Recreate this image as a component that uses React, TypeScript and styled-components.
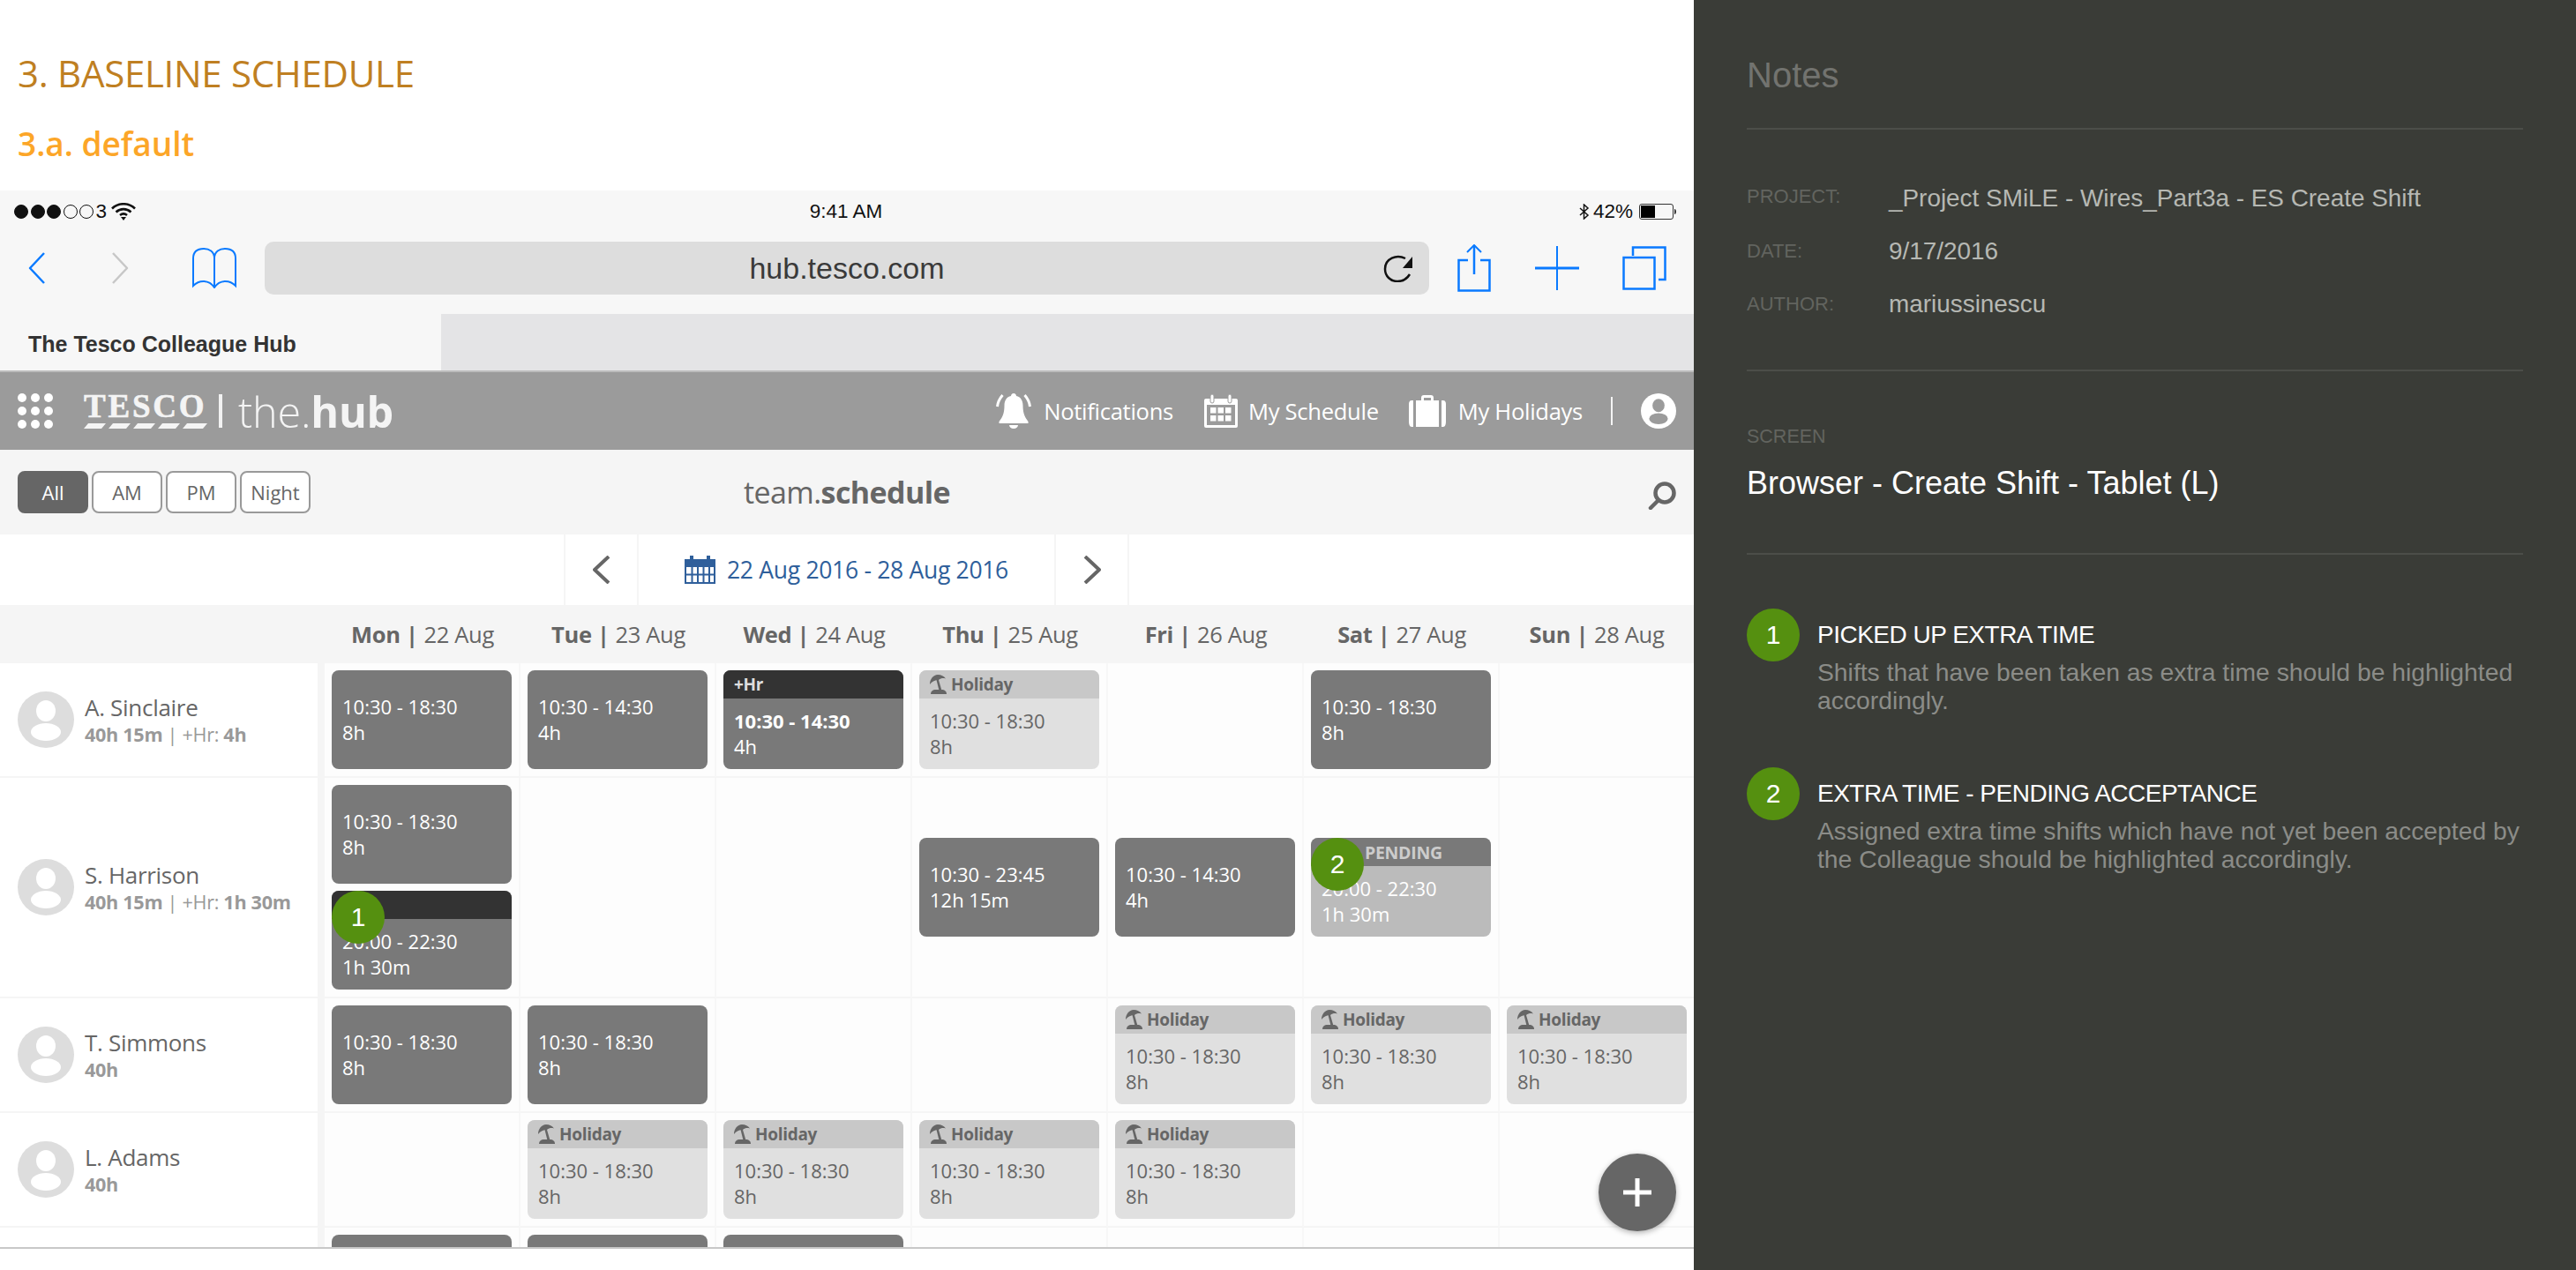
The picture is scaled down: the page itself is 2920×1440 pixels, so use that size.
import React from "react";
import styled, { createGlobalStyle } from "styled-components";

const Global = createGlobalStyle`
  html, body { margin: 0; padding: 0; background: #fff; }
  * { box-sizing: border-box; }
`;

const APP = `"Open Sans", sans-serif`;
const IOS = `"Liberation Sans", Arial, sans-serif`;

const Page = styled.div`
  display: grid;
  grid-template-columns: 1920px 1000px;
  width: 2920px;
  height: 1440px;
  overflow: hidden;
`;
const Left = styled.main`
  display: flex;
  flex-direction: column;
  height: 1440px;
  background: #fff;
`;
const Titles = styled.header`
  height: 216px;
  padding: 58px 0 0 20px;
  font-family: ${APP};
`;
const H1 = styled.h1`
  margin: 0;
  height: 50px;
  font-size: 42px;
  line-height: 50px;
  font-weight: 400;
  color: #bf7f22;
  letter-spacing: -0.3px;
`;
const H2 = styled.h2`
  margin: 32px 0 0;
  font-size: 37px;
  line-height: 46px;
  font-weight: 600;
  color: #fca628;
`;

/* ---------- iOS chrome ---------- */
const StatusBar = styled.div`
  display: grid;
  grid-template-columns: 1fr auto 1fr;
  align-items: center;
  height: 46px;
  padding: 2px 20px 0 18px;
  background: #f7f7f7;
  font-family: ${IOS};
  font-size: 22.5px;
  color: #111;
`;
const StatusLeft = styled.div`
  display: flex;
  align-items: center;
  gap: 2.5px;
  margin-left: -2px;
`;
const StatusRight = styled.div`
  display: flex;
  align-items: center;
  justify-content: flex-end;
  gap: 4px;
`;
const SignalDot = styled.span<{ $on: boolean }>`
  width: 16px;
  height: 16px;
  border-radius: 50%;
  border: 1px solid #111;
  background: ${(p) => (p.$on ? "#111" : "transparent")};
`;
const Toolbar = styled.div`
  display: flex;
  align-items: center;
  height: 94px;
  padding-bottom: 10px;
  background: #f7f7f7;
`;
const ToolSlot = styled.div<{ $w: number; $pad?: number }>`
  flex: none;
  display: flex;
  align-items: center;
  width: ${(p) => p.$w}px;
  padding-left: ${(p) => p.$pad ?? 0}px;
`;
const UrlBar = styled.div`
  position: relative;
  flex: none;
  display: flex;
  align-items: center;
  justify-content: center;
  width: 1320px;
  height: 60px;
  border-radius: 10px;
  background: #dddddd;
  font-family: ${IOS};
  font-size: 34px;
  color: #3a3a3a;
`;
const Reload = styled.svg`
  position: absolute;
  right: 19px;
  top: 14px;
`;
const TabStrip = styled.div`
  display: flex;
  height: 66px;
  background: #e4e4e6;
  border-bottom: 2px solid #bcbcbc;
`;
const ActiveTab = styled.div`
  width: 500px;
  height: 64px;
  padding: 18px 0 0 32px;
  background: #f7f7f7;
  font-family: ${IOS};
  font-size: 25px;
  line-height: 32px;
  font-weight: 700;
  color: #333;
`;

/* ---------- app header ---------- */
const AppBar = styled.div`
  display: flex;
  align-items: center;
  height: 88px;
  padding: 0 20px;
  background: #9b9b9b;
  color: #fff;
  font-family: ${APP};
`;
const Logo = styled.div`
  display: flex;
  align-items: center;
  flex: 1;
`;
const DotGrid = styled.div`
  display: grid;
  grid-template-columns: repeat(3, 10px);
  gap: 5px;
  margin-right: 35px;
`;
const Dot = styled.span`
  width: 10px;
  height: 10px;
  border-radius: 50%;
  background: #fff;
`;
const Wordmark = styled.div`
  position: relative;
  width: 140px;
  height: 40px;
  font-family: "Liberation Serif", serif;
  font-weight: 700;
  font-size: 37px;
  line-height: 30px;
  letter-spacing: 2.8px;
  color: #f4f4f4;
  -webkit-text-stroke: 0.6px #f4f4f4;
`;
const Stripes = styled.svg`
  position: absolute;
  left: 0;
  bottom: 0;
`;
const LogoBar = styled.span`
  width: 4px;
  height: 38px;
  margin: 0 18px 0 13px;
  background: #f2f2f2;
`;
const HubName = styled.div`
  font-size: 48.5px;
  line-height: 50px;
  font-weight: 300;
  color: #f4f4f4;
  letter-spacing: -0.2px;
  & b {
    font-weight: 700;
  }
`;
const NavItem = styled.div<{ $gap: number; $after: number }>`
  display: flex;
  align-items: center;
  gap: ${(p) => p.$gap}px;
  margin-right: ${(p) => p.$after}px;
  font-size: 25.6px;
  font-weight: 400;
  letter-spacing: -0.3px;
`;
const NavSep = styled.span`
  width: 2px;
  height: 32px;
  margin-right: 32px;
  background: #f5f5f5;
`;

/* ---------- sub bars ---------- */
const SubBar = styled.div`
  position: relative;
  display: flex;
  align-items: center;
  justify-content: center;
  height: 96px;
  background: #f5f5f5;
  font-family: ${APP};
`;
const Filters = styled.div`
  position: absolute;
  left: 20px;
  top: 24px;
  display: flex;
  gap: 4px;
`;
const Filter = styled.button<{ $on?: boolean }>`
  width: 80px;
  height: 48px;
  padding: 0;
  border-radius: 8px;
  border: 2px solid ${(p) => (p.$on ? "#666" : "#999")};
  background: ${(p) => (p.$on ? "#666" : "#fff")};
  color: ${(p) => (p.$on ? "#fff" : "#666")};
  font-family: ${APP};
  font-size: 22px;
  font-weight: 400;
`;
const PageTitle = styled.div`
  font-size: 34px;
  line-height: 44px;
  color: #666;
  letter-spacing: -0.6px;
  & b {
    font-weight: 700;
  }
`;
const SearchIcon = styled.svg`
  position: absolute;
  right: 20px;
  top: 36px;
`;
const DateBar = styled.div`
  display: flex;
  justify-content: center;
  height: 80px;
  padding-right: 1px;
  background: #fff;
  font-family: ${APP};
`;
const NavCell = styled.div`
  display: flex;
  align-items: center;
  justify-content: center;
  width: 85px;
  border-left: 2px solid #f5f5f5;
  border-right: 2px solid #f5f5f5;
`;
const DateRange = styled.div`
  display: flex;
  align-items: center;
  justify-content: center;
  gap: 13px;
  width: 471px;
  font-size: 26.5px;
  color: #2f5f9b;
  letter-spacing: -0.3px;
`;

/* ---------- schedule ---------- */
const Viewport = styled.div`
  position: relative;
  height: 730px;
  overflow: hidden;
  border-bottom: 2px solid #c8c8c8;
  font-family: ${APP};
`;
const Grid = styled.div`
  display: grid;
  grid-template-columns: 368px repeat(6, 222px) 220px;
`;
const DayHead = styled.div`
  height: 66px;
  display: flex;
  align-items: center;
  justify-content: center;
  background: #f5f5f5;
  font-size: 25.5px;
  color: #666;
  letter-spacing: -0.35px;
  & b {
    font-weight: 700;
    margin-right: 7px;
  }
`;
const NameCell = styled.div`
  display: flex;
  align-items: center;
  gap: 12px;
  padding-left: 20px;
  background: #fff;
  border-right: 8px solid #f5f5f5;
  border-bottom: 2px solid #f5f5f5;
`;
const NameText = styled.div`
  display: flex;
  flex-direction: column;
`;
const Person = styled.div`
  font-size: 26px;
  line-height: 32px;
  color: #666;
  letter-spacing: -0.3px;
`;
const Hours = styled.div`
  margin-top: 1px;
  font-size: 21.6px;
  line-height: 28px;
  font-weight: 700;
  color: #999;
  letter-spacing: -0.3px;
  white-space: nowrap;
  & span {
    font-weight: 400;
  }
`;
const DayCell = styled.div<{ $last?: boolean }>`
  display: flex;
  flex-direction: column;
  justify-content: center;
  gap: 8px;
  min-height: 130px;
  padding: 8px;
  background: #fdfdfd;
  border-right: ${(p) => (p.$last ? "0" : "2px solid #f7f7f7")};
  border-bottom: 2px solid #f5f5f5;
`;
type Tone = "work" | "extra" | "holiday" | "pending";
const bodyBg: Record<Tone, string> = { work: "#797979", extra: "#797979", holiday: "#e0e0e0", pending: "#bbbbbb" };
const headBg: Record<Tone, string> = { work: "#797979", extra: "#333333", holiday: "#c8c8c8", pending: "#797979" };
const headFg: Record<Tone, string> = { work: "#fff", extra: "#ddd", holiday: "#666", pending: "#ccc" };
const Card = styled.div<{ $tone: Tone }>`
  position: relative;
  flex: none;
  display: flex;
  flex-direction: column;
  width: 204px;
  height: 112px;
  border-radius: 8px;
  overflow: hidden;
  background: ${(p) => bodyBg[p.$tone]};
  color: ${(p) => (p.$tone === "holiday" ? "#666" : "#fff")};
`;
const CardHead = styled.div<{ $tone: Tone }>`
  flex: none;
  display: flex;
  align-items: center;
  gap: 4px;
  height: 32px;
  padding: 0 12px;
  background: ${(p) => headBg[p.$tone]};
  color: ${(p) => headFg[p.$tone]};
  font-size: 19px;
  font-weight: 700;
  letter-spacing: -0.3px;
`;
const PendingLabel = styled.span`
  margin-left: 49px;
  font-size: 19.5px;
`;
const CardBody = styled.div<{ $strong?: boolean }>`
  flex: 1;
  display: flex;
  flex-direction: column;
  justify-content: center;
  padding-left: 12px;
  font-size: 22px;
  line-height: 29px;
  font-weight: 400;
  & > :first-child {
    font-weight: ${(p) => (p.$strong ? 700 : 400)};
  }
`;
const Marker = styled.div`
  display: flex;
  align-items: center;
  justify-content: center;
  flex: none;
  width: 60px;
  height: 60px;
  border-radius: 50%;
  background: #559010;
  color: #fff;
  font-family: ${IOS};
  font-size: 30px;
`;
const CardMarker = styled(Marker)`
  position: absolute;
  left: 0;
  top: 0;
`;
const Fab = styled.button`
  position: absolute;
  right: 20px;
  bottom: 18px;
  display: flex;
  align-items: center;
  justify-content: center;
  width: 88px;
  height: 88px;
  padding: 0;
  border: 0;
  border-radius: 50%;
  background: #666;
  box-shadow: 0 2px 6px rgba(0, 0, 0, 0.3);
`;

/* ---------- notes ---------- */
const Notes = styled.aside`
  height: 1440px;
  padding: 60px 60px 0;
  background: #3a3c37;
  font-family: ${IOS};
`;
const NotesTitle = styled.h2`
  margin: 0;
  height: 87px;
  padding-top: 2px;
  font-size: 40px;
  line-height: 46px;
  font-weight: 400;
  color: #72736f;
  border-bottom: 2px solid #4c4e49;
`;
const Meta = styled.div`
  display: grid;
  grid-template-columns: 161px 1fr;
  align-content: start;
  height: 274px;
  padding-top: 48px;
  border-bottom: 2px solid #4c4e49;
`;
const MetaKey = styled.div<{ $up?: number }>`
  height: 60px;
  font-size: 22px;
  line-height: 60px;
  color: #62645f;
  margin-top: ${(p) => -(p.$up ?? 0)}px;
`;
const MetaValue = styled.div`
  height: 60px;
  font-size: 27.9px;
  line-height: 60px;
  color: #b6b8b3;
`;
const ScreenBlock = styled.div`
  height: 208px;
  padding-top: 60px;
  border-bottom: 2px solid #4c4e49;
`;
const ScreenKey = styled.div`
  font-size: 21.5px;
  line-height: 28px;
  color: #62645f;
`;
const ScreenName = styled.div`
  margin-top: 17px;
  font-size: 36px;
  line-height: 44px;
  color: #fff;
`;
const NoteList = styled.div`
  display: flex;
  flex-direction: column;
  gap: 60px;
  padding-top: 61px;
`;
const Note = styled.div`
  display: flex;
  gap: 20px;
  height: 120px;
`;
const NoteText = styled.div`
  padding-top: 12px;
`;
const NoteTitle = styled.div`
  font-size: 28px;
  line-height: 36px;
  color: #fff;
  letter-spacing: -0.5px;
`;
const NoteDesc = styled.div`
  margin-top: 8px;
  width: 800px;
  font-size: 28.3px;
  line-height: 32px;
  color: #8b8c88;
`;

/* ---------- drawings ---------- */
const Avatar = ({ size = 64, bg = "#dddddd", fg = "#fff" }: { size?: number; bg?: string; fg?: string }) => (
  <svg width={size} height={size} viewBox="0 0 64 64" style={{ flex: "none" }}>
    <circle cx="32" cy="32" r="32" fill={bg} />
    <ellipse cx="32" cy="22" rx="11" ry="12" fill={fg} />
    <ellipse cx="32" cy="46" rx="17" ry="10" fill={fg} />
  </svg>
);
const Umbrella = () => (
  <svg width="20" height="22" viewBox="0 0 20 22" fill="#666" style={{ flex: "none" }}>
    <path d="M0 11C0 5 4 0 9 0c4 0 7 1.500 9 4.500-3-1-5.500-.5-8 1.500-4 0-7.500 1.500-10 5z" />
    <path d="M7.500 6H10l3.500 12h-3z" />
    <path d="M1 22c0-3 2-5 6-5h6c4 0 6 2 6 5z" />
  </svg>
);
const Chevron = ({ dir, w = 20, h = 32, color = "#666", sw = 4 }: { dir: "l" | "r"; w?: number; h?: number; color?: string; sw?: number }) => (
  <svg width={w} height={h} viewBox={`0 0 ${w} ${h}`} fill="none" stroke={color} strokeWidth={sw} strokeLinejoin="round">
    {dir === "l" ? <path d={`M${w - 2} 1L2 ${h / 2}L${w - 2} ${h - 1}`} /> : <path d={`M2 1L${w - 2} ${h / 2}L2 ${h - 1}`} />}
  </svg>
);
const Wifi = () => (
  <svg width="28" height="20" viewBox="0 0 28 20" fill="none" stroke="#111" strokeWidth="2.6" style={{ marginLeft: 2 }}>
    <path d="M1 6.5C8-.5 20-.5 27 6.5" />
    <path d="M5.5 10.5C10.5 6 17.5 6 22.5 10.5" />
    <path d="M10 14c2.5-2 5.5-2 8 0" />
    <path d="M11 16h6l-3 4z" fill="#111" stroke="none" />
  </svg>
);
const Battery = () => (
  <svg width="42" height="18" viewBox="0 0 42 18" style={{ marginLeft: 3 }}>
    <rect x="0.5" y="0.5" width="38" height="17" rx="2.5" fill="none" stroke="#333" />
    <rect x="2" y="2" width="16" height="14" fill="#000" />
    <path d="M40 6c1.5 0 2 1.5 2 3s-.5 3-2 3z" fill="#333" />
  </svg>
);
const Bluetooth = () => (
  <svg width="12" height="18" viewBox="0 0 12 18" fill="none" stroke="#111" strokeWidth="1.5">
    <path d="M1 5l9 8-4.5 4V1L10 5l-9 8" />
  </svg>
);
const Book = () => (
  <svg width="50" height="46" viewBox="0 0 50 46" fill="none" stroke="#0a7aff" strokeWidth="2">
    <path d="M25 12C25 4 19 1 13 1 6 1 1 4 1 12v31c7-7 18-7 24 2 6-9 17-9 24-2V12C49 4 44 1 37 1 31 1 25 4 25 12v33" />
  </svg>
);
const Share = () => (
  <svg width="38" height="54" viewBox="0 0 38 54" fill="none" stroke="#0a7aff" strokeWidth="2.5">
    <path d="M19 1v33" />
    <path d="M11 9l8-8 8 8" strokeWidth="2" />
    <path d="M12 18H1.5v34.5h35V18H26" />
  </svg>
);
const Plus = () => (
  <svg width="50" height="50" viewBox="0 0 50 50" stroke="#0a7aff">
    <path d="M25 0v50" strokeWidth="2" />
    <path d="M0 25h50" strokeWidth="3" />
  </svg>
);
const Tabs = () => (
  <svg width="50" height="50" viewBox="0 0 50 50" fill="none" stroke="#0a7aff" strokeWidth="2.5">
    <path d="M12 11V1.5h36.5V38H41" />
    <rect x="1.5" y="13" width="35" height="35.5" />
  </svg>
);
const BellIcon = () => (
  <svg width="40" height="40" viewBox="0 0 40 40" fill="#fff">
    <path d="M20 0c2 0 3 1.5 3 3 5 1 7.5 5 7.5 11 0 8 2 13 6 18v2h-33v-2c4-5 6-10 6-18 0-6 2.5-10 7.5-11 0-1.5 1-3 3-3z" />
    <path d="M15 36h10c0 2-2 4-5 4s-5-2-5-4z" />
    <path d="M1.5 15C2 10 4 6 7.5 2M38.5 15C38 10 36 6 32.5 2" fill="none" stroke="#fff" strokeWidth="3" />
  </svg>
);
const CalIcon = ({ color = "#fff", gap = "#9b9b9b", w = 38, h = 38 }: { color?: string; gap?: string; w?: number; h?: number }) => (
  <svg width={w} height={h} viewBox="0 0 38 38">
    <rect x="0" y="5" width="38" height="33" rx="2" fill={color} />
    <rect x="7" y="0" width="4" height="10" rx="2" fill={color} stroke={gap} strokeWidth="1" />
    <rect x="27" y="0" width="4" height="10" rx="2" fill={color} stroke={gap} strokeWidth="1" />
    <rect x="3" y="12" width="32" height="23" fill={gap} />
    {[7, 15.5, 24].map((x) => [15, 24].map((y) => <rect key={`${x}-${y}`} x={x} y={y} width="6.5" height="6.5" fill={color} />))}
  </svg>
);
const BlueCal = () => (
  <svg width="35" height="32" viewBox="0 0 35 32">
    <rect x="0" y="4" width="35" height="28" fill="#2f5f9b" />
    <rect x="6" y="0" width="4" height="6" fill="#2f5f9b" />
    <rect x="25" y="0" width="4" height="6" fill="#2f5f9b" />
    <rect x="2" y="13" width="31" height="17" fill="#fff" />
    <path d="M8.5 13v17M15 13v17M21.5 13v17M28 13v17M2 21.5h31" stroke="#2f5f9b" strokeWidth="2" />
  </svg>
);
const Briefcase = () => (
  <svg width="42" height="36" viewBox="0 0 42 36" fill="#fff">
    <path d="M14 7V3c0-2 1-3 3-3h8c2 0 3 1 3 3v4h-3V3h-8v4z" />
    <path d="M5 6H3C1 6 0 8 0 10v20c0 3 1 6 3 6h2zM8 6h26v30H8zM37 6h2c2 0 3 2 3 4v20c0 3-1 6-3 6h-2z" />
  </svg>
);

type Shift = { tone: Tone; time: string; dur: string; label?: string; strong?: boolean; marker?: string };
const w = (time = "10:30 - 18:30", dur = "8h"): Shift => ({ tone: "work", time, dur });
const h = (): Shift => ({ tone: "holiday", time: "10:30 - 18:30", dur: "8h", label: "Holiday" });
/* the next row is cut by the fold: only the top of its cards shows */
const cut = (): Shift => ({ tone: "work", time: "", dur: "" });

const DAYS = [["Mon", "22 Aug"], ["Tue", "23 Aug"], ["Wed", "24 Aug"], ["Thu", "25 Aug"], ["Fri", "26 Aug"], ["Sat", "27 Aug"], ["Sun", "28 Aug"]];

const ROWS: { name: string; hours: React.ReactNode; days: Shift[][] }[] = [
  {
    name: "A. Sinclaire",
    hours: <>40h 15m <span>| +Hr:</span> 4h</>,
    days: [
      [w()],
      [w("10:30 - 14:30", "4h")],
      [{ tone: "extra", time: "10:30 - 14:30", dur: "4h", label: "+Hr", strong: true }],
      [h()],
      [],
      [w()],
      [],
    ],
  },
  {
    name: "S. Harrison",
    hours: <>40h 15m <span>| +Hr:</span> 1h 30m</>,
    days: [
      [w(), { tone: "extra", time: "20:00 - 22:30", dur: "1h 30m", label: "", marker: "1" }],
      [],
      [],
      [w("10:30 - 23:45", "12h 15m")],
      [w("10:30 - 14:30", "4h")],
      [{ tone: "pending", time: "20:00 - 22:30", dur: "1h 30m", label: "PENDING", marker: "2" }],
      [],
    ],
  },
  { name: "T. Simmons", hours: <>40h</>, days: [[w()], [w()], [], [], [h()], [h()], [h()]] },
  { name: "L. Adams", hours: <>40h</>, days: [[], [h()], [h()], [h()], [h()], [], []] },
  { name: "", hours: null, days: [[cut()], [cut()], [cut()], [], [], [], []] },
];

const ShiftCard = ({ s }: { s: Shift }) => (
  <Card $tone={s.tone}>
    {s.label !== undefined && (
      <CardHead $tone={s.tone}>
        {s.label === "Holiday" && <Umbrella />}
        {s.label === "PENDING" ? <PendingLabel>PENDING</PendingLabel> : s.label}
      </CardHead>
    )}
    <CardBody $strong={s.strong}>
      {s.time && <div>{s.time}</div>}
      {s.dur && <div>{s.dur}</div>}
    </CardBody>
    {s.marker && <CardMarker>{s.marker}</CardMarker>}
  </Card>
);

export default function App() {
  return (
    <Page>
      <Global />
      <Left>
        <Titles>
          <H1>3. BASELINE SCHEDULE</H1>
          <H2>3.a. default</H2>
        </Titles>

        <StatusBar>
          <StatusLeft>
            {[1, 1, 1, 0, 0].map((on, i) => (
              <SignalDot key={i} $on={!!on} />
            ))}
            <span>3</span>
            <Wifi />
          </StatusLeft>
          <span>9:41 AM</span>
          <StatusRight>
            <Bluetooth />
            <span>42%</span>
            <Battery />
          </StatusRight>
        </StatusBar>

        <Toolbar>
          <ToolSlot $w={94} $pad={32}>
            <Chevron dir="l" w={20} h={36} color="#0a7aff" sw={2.5} />
          </ToolSlot>
          <ToolSlot $w={124} $pad={32}>
            <Chevron dir="r" w={20} h={36} color="#c7c7c7" sw={2.5} />
          </ToolSlot>
          <ToolSlot $w={82}>
            <Book />
          </ToolSlot>
          <UrlBar>
            hub.tesco.com
            <Reload width="33" height="32" viewBox="0 0 33 32" fill="none">
              <path d="M25 5C15 0 2 5 2 17c0 8 6 14 14 14 6 0 11-3 14-8" stroke="#111" strokeWidth="2.5" />
              <path d="M33 3v13h-11z" fill="#111" />
            </Reload>
          </UrlBar>
          <ToolSlot $w={120} $pad={32}>
            <Share />
          </ToolSlot>
          <ToolSlot $w={99} $pad={0}>
            <Plus />
          </ToolSlot>
          <ToolSlot $w={60}>
            <Tabs />
          </ToolSlot>
        </Toolbar>

        <TabStrip>
          <ActiveTab>The Tesco Colleague Hub</ActiveTab>
        </TabStrip>

        <AppBar>
          <Logo>
            <DotGrid>
              {Array.from({ length: 9 }).map((_, i) => (
                <Dot key={i} />
              ))}
            </DotGrid>
            <Wordmark>
              TESCO
              <Stripes width="140" height="6" viewBox="0 0 140 6" fill="#f4f4f4">
                <path d="M5 0h20l-5 6H0zM33 0h20l-5 6H28zM61 0h20l-5 6H56zM89 0h20l-5 6H84zM117 0h23l-5 6H112z" />
              </Stripes>
            </Wordmark>
            <LogoBar />
            <HubName>
              the.<b>hub</b>
            </HubName>
          </Logo>
          <NavItem $gap={14} $after={35}>
            <BellIcon />
            Notifications
          </NavItem>
          <NavItem $gap={12} $after={34}>
            <CalIcon />
            My Schedule
          </NavItem>
          <NavItem $gap={14} $after={32}>
            <Briefcase />
            My Holidays
          </NavItem>
          <NavSep />
          <Avatar size={40} bg="#fff" fg="#9b9b9b" />
        </AppBar>

        <SubBar>
          <Filters>
            <Filter $on>All</Filter>
            <Filter>AM</Filter>
            <Filter>PM</Filter>
            <Filter>Night</Filter>
          </Filters>
          <PageTitle>
            team.<b>schedule</b>
          </PageTitle>
          <SearchIcon width="32" height="32" viewBox="0 0 32 32" fill="none" stroke="#666" strokeWidth="4.5">
            <circle cx="19" cy="13" r="10.5" />
            <path d="M12 21L3 30" strokeLinecap="round" />
          </SearchIcon>
        </SubBar>

        <DateBar>
          <NavCell>
            <Chevron dir="l" />
          </NavCell>
          <DateRange>
            <BlueCal />
            22 Aug 2016 - 28 Aug 2016
          </DateRange>
          <NavCell>
            <Chevron dir="r" />
          </NavCell>
        </DateBar>

        <Viewport>
          <Grid>
            <DayHead />
            {DAYS.map(([d, n]) => (
              <DayHead key={d}>
                <b>{d} |</b>
                {n}
              </DayHead>
            ))}
            {ROWS.map((r, ri) => (
              <React.Fragment key={ri}>
                <NameCell>
                  {r.name && (
                    <>
                      <Avatar />
                      <NameText>
                        <Person>{r.name}</Person>
                        <Hours>{r.hours}</Hours>
                      </NameText>
                    </>
                  )}
                </NameCell>
                {r.days.map((shifts, di) => (
                  <DayCell key={di} $last={di === 6}>
                    {shifts.map((s, si) => (
                      <ShiftCard key={si} s={s} />
                    ))}
                  </DayCell>
                ))}
              </React.Fragment>
            ))}
          </Grid>
          <Fab aria-label="Add">
            <svg width="34" height="34" viewBox="0 0 34 34" stroke="#fff" strokeWidth="5">
              <path d="M17 1v32M1 17h32" />
            </svg>
          </Fab>
        </Viewport>
      </Left>

      <Notes>
        <NotesTitle>Notes</NotesTitle>
        <Meta>
          <MetaKey $up={2}>PROJECT:</MetaKey>
          <MetaValue>_Project SMiLE - Wires_Part3a - ES Create Shift</MetaValue>
          <MetaKey>DATE:</MetaKey>
          <MetaValue>9/17/2016</MetaValue>
          <MetaKey>AUTHOR:</MetaKey>
          <MetaValue>mariussinescu</MetaValue>
        </Meta>
        <ScreenBlock>
          <ScreenKey>SCREEN</ScreenKey>
          <ScreenName>Browser - Create Shift - Tablet (L)</ScreenName>
        </ScreenBlock>
        <NoteList>
          <Note>
            <Marker>1</Marker>
            <NoteText>
              <NoteTitle>PICKED UP EXTRA TIME</NoteTitle>
              <NoteDesc>Shifts that have been taken as extra time should be highlighted accordingly.</NoteDesc>
            </NoteText>
          </Note>
          <Note>
            <Marker>2</Marker>
            <NoteText>
              <NoteTitle>EXTRA TIME - PENDING ACCEPTANCE</NoteTitle>
              <NoteDesc>Assigned extra time shifts which have not yet been accepted by the Colleague should be highlighted accordingly.</NoteDesc>
            </NoteText>
          </Note>
        </NoteList>
      </Notes>
    </Page>
  );
}
